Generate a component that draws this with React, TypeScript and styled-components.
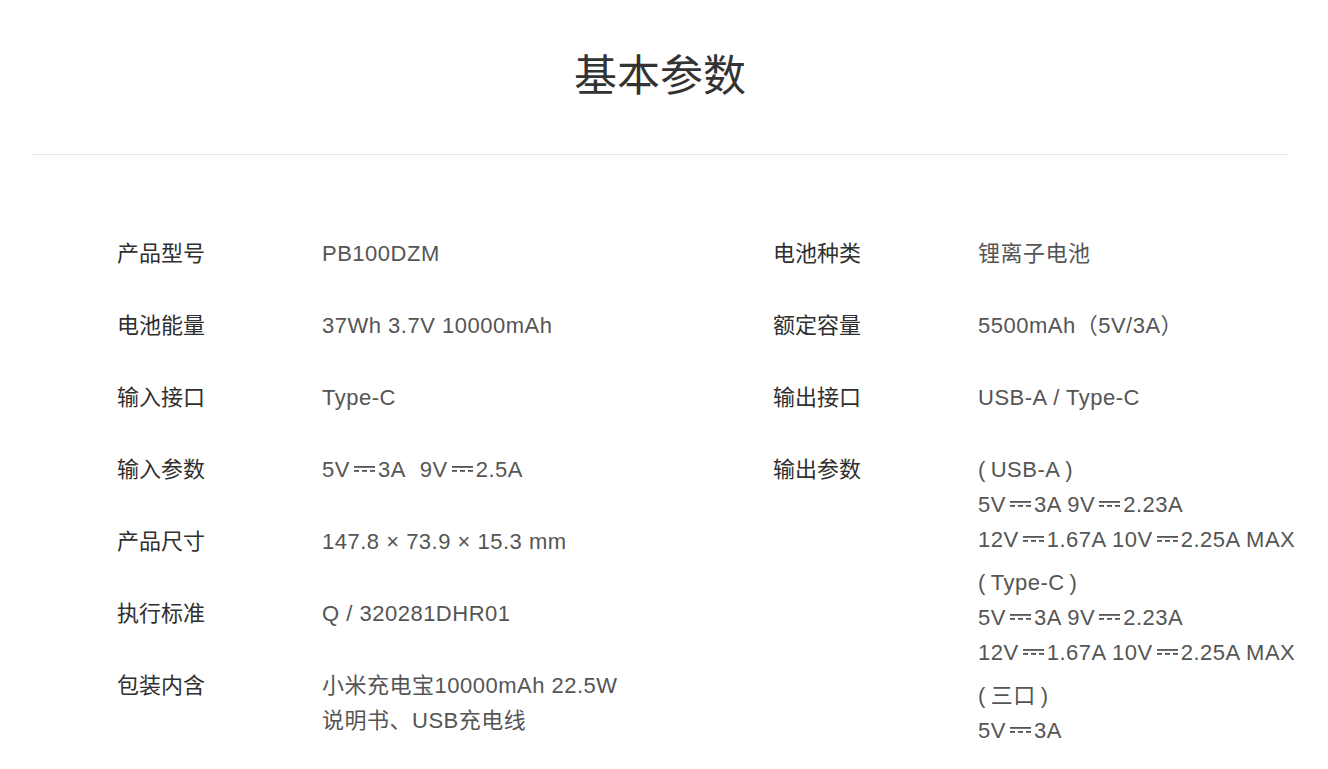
import React, { FC, ReactNode } from 'react';
import styled, { createGlobalStyle } from 'styled-components';

const GlobalStyle = createGlobalStyle`
  body {
    margin: 0;
    background: #fff;
    font-family: "Liberation Sans", "Noto Sans CJK SC", sans-serif;
  }
`;

const Page = styled.div`
  padding-top: 42px;
  width: 1320px;
  height: 769px;
  overflow: hidden;
  box-sizing: border-box;
`;

const Title = styled.h1`
  margin: 0;
  text-align: center;
  font-size: 43px;
  line-height: 60px;
  font-weight: 400;
  color: #333;
  font-family: "Noto Sans CJK SC", sans-serif;
`;

const Divider = styled.div`
  margin: 52px 32px 0;
  height: 1px;
  background: #e5e5e5;
`;

const Specs = styled.div`
  display: grid;
  grid-template-columns: 656px 1fr;
  padding-left: 117px;
  margin-top: 81px;
`;

const Column = styled.div`
  display: flex;
  flex-direction: column;
  gap: 36px;
`;

const Row = styled.div`
  display: grid;
  grid-template-columns: 205px 1fr;
  font-size: 22px;
  line-height: 36px;
`;

const Label = styled.div`
  color: #2f2f2f;
`;

const Value = styled.div`
  color: #555;
  letter-spacing: 0.5px;
  white-space: nowrap;
`;

const Line = styled.div`
  line-height: 35px;
`;

const Group = styled.div`
  & + & {
    margin-top: 8px;
  }
`;

const Gap = styled.span`
  display: inline-block;
  width: 14px;
`;

const DcIcon = styled.svg`
  vertical-align: 4px;
  margin: 0 3px 0 4px;
`;

// DC current mark: solid bar over a dashed one
const Dc: FC = () => (
  <DcIcon width="21" height="9" viewBox="0 0 21 9">
    <rect x="0" y="2" width="21" height="1.8" fill="currentColor" />
    <rect x="0" y="6" width="5" height="1.8" fill="currentColor" />
    <rect x="8" y="6" width="5" height="1.8" fill="currentColor" />
    <rect x="16" y="6" width="5" height="1.8" fill="currentColor" />
  </DcIcon>
);

type SpecType = { name: string; value: ReactNode };

const leftSpecs: SpecType[] = [
  { name: '产品型号', value: 'PB100DZM' },
  { name: '电池能量', value: '37Wh 3.7V 10000mAh' },
  { name: '输入接口', value: 'Type-C' },
  {
    name: '输入参数',
    value: (
      <>
        5V<Dc />3A<Gap />9V<Dc />2.5A
      </>
    ),
  },
  { name: '产品尺寸', value: '147.8 × 73.9 × 15.3 mm' },
  { name: '执行标准', value: 'Q / 320281DHR01' },
  {
    name: '包装内含',
    value: (
      <>
        <Line>小米充电宝10000mAh 22.5W</Line>
        <Line>说明书、USB充电线</Line>
      </>
    ),
  },
];

const outputGroups: { title: string; lines: ReactNode[] }[] = [
  {
    title: '(\u2009USB-A\u2009)',
    lines: [
      <>5V<Dc />3A 9V<Dc />2.23A</>,
      <>12V<Dc />1.67A 10V<Dc />2.25A MAX</>,
    ],
  },
  {
    title: '(\u2009Type-C\u2009)',
    lines: [
      <>5V<Dc />3A 9V<Dc />2.23A</>,
      <>12V<Dc />1.67A 10V<Dc />2.25A MAX</>,
    ],
  },
  {
    title: '(\u2009三口\u2009)',
    lines: [<>5V<Dc />3A</>],
  },
];

const rightSpecs: SpecType[] = [
  { name: '电池种类', value: '锂离子电池' },
  { name: '额定容量', value: '5500mAh（5V/3A）' },
  { name: '输出接口', value: 'USB-A / Type-C' },
  {
    name: '输出参数',
    value: (
      <>
        {outputGroups.map((g) => (
          <Group key={g.title}>
            <Line>{g.title}</Line>
            {g.lines.map((l, i) => (
              <Line key={i}>{l}</Line>
            ))}
          </Group>
        ))}
      </>
    ),
  },
];

const SpecColumn: FC<{ data: SpecType[] }> = ({ data }) => (
  <Column>
    {data.map((s) => (
      <Row key={s.name}>
        <Label>{s.name}</Label>
        <Value>{s.value}</Value>
      </Row>
    ))}
  </Column>
);

export default function App() {
  return (
    <Page>
      <GlobalStyle />
      <Title>基本参数</Title>
      <Divider />
      <Specs>
        <SpecColumn data={leftSpecs} />
        <SpecColumn data={rightSpecs} />
      </Specs>
    </Page>
  );
}
